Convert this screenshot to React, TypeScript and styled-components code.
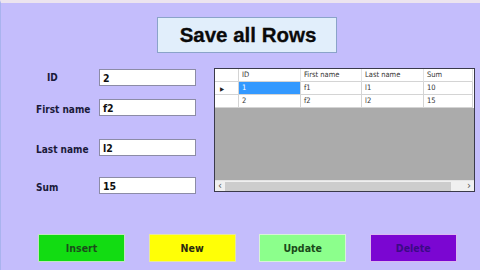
import React from "react";
import styled, { createGlobalStyle } from "styled-components";

const Global = createGlobalStyle`
  html, body { margin: 0; padding: 0; background: #c4bdfc; }
  * { box-sizing: border-box; }
`;

const Page = styled.div`
  width: 480px;
  height: 270px;
  background: #c4bdfc;
  border-top: 3px solid #ece4ef;
  border-left: 1px solid #a9b3ee;
  display: flex;
  flex-direction: column;
  overflow: hidden;
  font-family: "DejaVu Sans Condensed", "DejaVu Sans", sans-serif;
`;

const TitleRow = styled.div`
  padding: 14px 0 0 156px;
  display: flex;
`;

const SaveButton = styled.button`
  width: 180px;
  height: 36px;
  background: #e1eefb;
  border: 1px solid #8aa3c9;
  font-family: "Liberation Sans", Arial, sans-serif;
  font-weight: 700;
  font-size: 20.5px;
  color: #0a0a0a;
  padding: 0 0 0 2px;
  display: flex;
  align-items: center;
  justify-content: center;
  -webkit-text-stroke: 0.3px #0a0a0a;
`;

const Main = styled.div`
  display: flex;
  margin-top: 15px;
  padding-left: 35px;
  gap: 17px;
`;

const Form = styled.div`
  display: flex;
  flex-direction: column;
  width: 161px;
  padding-top: 1px;
`;

const Field = styled.div<{ $gap: number }>`
  display: flex;
  align-items: center;
  height: 17px;
  margin-top: ${(p) => p.$gap}px;
`;

const Label = styled.label<{ $indent?: number; $drop?: number }>`
  width: 63px;
  padding-left: ${(p) => p.$indent ?? 0}px;
  padding-top: ${(p) => p.$drop ?? 0}px;
  font-weight: 700;
  font-size: 10px;
  color: #1a1a3a;
  white-space: nowrap;
`;

const Input = styled.div`
  width: 97px;
  height: 17px;
  background: #ffffff;
  border: 1px solid #8c8ca6;
  padding: 0 3px;
  display: flex;
  align-items: center;
  font-weight: 700;
  font-size: 10.5px;
  color: #101010;
`;

const GridFrame = styled.div`
  width: 261px;
  height: 124px;
  border: 1px solid #3a3a4a;
  background: #ababab;
  display: flex;
  flex-direction: column;
`;

const Row = styled.div`
  display: flex;
  height: 13px;
  flex: none;
  background: #ffffff;
`;

const Cell = styled.div<{ $w: number; $sel?: boolean; $header?: boolean }>`
  width: ${(p) => p.$w}px;
  flex: none;
  height: 13px;
  border-right: 1px solid ${(p) => (p.$header ? "#e3e3e3" : "#d4d4d4")};
  border-bottom: 1px solid #d4d4d4;
  background: ${(p) => (p.$sel ? "#3399ff" : "#ffffff")};
  color: ${(p) => (p.$sel ? "#ffffff" : "#333333")};
  font-family: "DejaVu Sans Condensed", "DejaVu Sans", sans-serif;
  font-size: 7.5px;
  line-height: 12px;
  padding-left: 3px;
  white-space: nowrap;
  overflow: hidden;
`;

const RowHead = styled.div`
  width: 24px;
  flex: none;
  height: 13px;
  border-right: 1px solid #d4d4d4;
  border-bottom: 1px solid #d4d4d4;
  display: flex;
  align-items: center;
  padding-left: 5px;
  font-size: 6px;
  color: #222;
`;

const Filler = styled.div`
  flex: 1;
`;

const ScrollBar = styled.div`
  height: 11px;
  flex: none;
  background: #f0f0f0;
  display: flex;
  align-items: center;
  border-top: 1px solid #e4e4e4;
`;

const Arrow = styled.span`
  width: 10px;
  flex: none;
  text-align: center;
  font-size: 10px;
  line-height: 10px;
  color: #555;
  font-family: "DejaVu Sans", sans-serif;
`;

const Thumb = styled.div`
  width: 226px;
  height: 9px;
  background: #cdcdcd;
  flex: none;
`;

const Track = styled.div`
  flex: 1;
`;

const ButtonRow = styled.div`
  display: flex;
  margin-top: 40px;
  padding-left: 37px;
  gap: 23.6px;
`;

const ActionButton = styled.button<{ $bg: string; $fg: string; $edge: string }>`
  width: 87px;
  height: 28px;
  background: ${(p) => p.$bg};
  border: 1px solid ${(p) => p.$edge};
  color: ${(p) => p.$fg};
  font-family: "DejaVu Sans Condensed", "DejaVu Sans", sans-serif;
  font-weight: 700;
  font-size: 10.5px;
  padding: 0;
`;

const cols = [62, 61, 62, 49];
const headers = ["ID", "First name", "Last name", "Sum"];
const rows = [
  ["1", "f1", "l1", "10"],
  ["2", "f2", "l2", "15"],
];

export default function App() {
  return (
    <>
      <Global />
      <Page>
        <TitleRow>
          <SaveButton>Save all Rows</SaveButton>
        </TitleRow>
        <Main>
          <Form>
            <Field $gap={0}>
              <Label $indent={11} $drop={0}>ID</Label>
              <Input>2</Input>
            </Field>
            <Field $gap={13}>
              <Label $drop={4}>First name</Label>
              <Input>f2</Input>
            </Field>
            <Field $gap={23}>
              <Label $drop={4}>Last name</Label>
              <Input>l2</Input>
            </Field>
            <Field $gap={21}>
              <Label $drop={4}>Sum</Label>
              <Input>15</Input>
            </Field>
          </Form>
          <GridFrame>
            <Row>
              <RowHead />
              {headers.map((h, i) => (
                <Cell key={h} $w={cols[i]} $header>
                  {h}
                </Cell>
              ))}
            </Row>
            {rows.map((r, ri) => (
              <Row key={ri}>
                <RowHead>{ri === 0 ? "▶" : ""}</RowHead>
                {r.map((v, ci) => (
                  <Cell key={ci} $w={cols[ci]} $sel={ri === 0 && ci === 0}>
                    {v}
                  </Cell>
                ))}
              </Row>
            ))}
            <Filler />
            <ScrollBar>
              <Arrow>‹</Arrow>
              <Thumb />
              <Track />
              <Arrow>›</Arrow>
            </ScrollBar>
          </GridFrame>
        </Main>
        <ButtonRow>
          <ActionButton $bg="#12dc12" $fg="#1b4d1b" $edge="#bfe6bf">Insert</ActionButton>
          <ActionButton $bg="#ffff06" $fg="#2a2a10" $edge="#e6e6a0">New</ActionButton>
          <ActionButton $bg="#8cff8c" $fg="#1a4a1a" $edge="#d8f2d8">Update</ActionButton>
          <ActionButton $bg="#7b06d2" $fg="#3b0a86" $edge="#d8b8f0">Delete</ActionButton>
        </ButtonRow>
      </Page>
    </>
  );
}
